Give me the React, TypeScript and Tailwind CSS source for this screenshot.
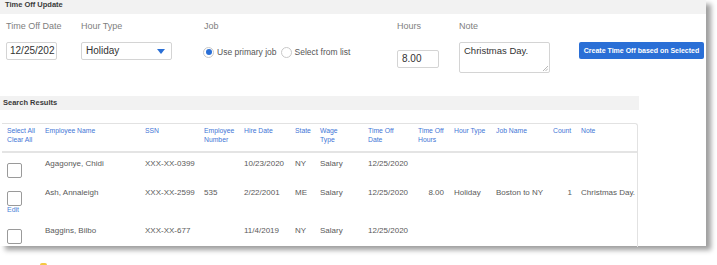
const rows = [
  {
    name: "Agagonye, Chidi",
    ssn: "XXX-XX-0399",
    num: "",
    hire: "10/23/2020",
    state: "NY",
    wage: "Salary",
    date: "12/25/2020",
    hours: "",
    type: "",
    job: "",
    count: "",
    note: "",
    edit: false,
  },
  {
    name: "Ash, Annaleigh",
    ssn: "XXX-XX-2599",
    num: "535",
    hire: "2/22/2001",
    state: "ME",
    wage: "Salary",
    date: "12/25/2020",
    hours: "8.00",
    type: "Holiday",
    job: "Boston to NY",
    count: "1",
    note: "Christmas Day.",
    edit: true,
  },
  {
    name: "Baggins, Bilbo",
    ssn: "XXX-XX-677",
    num: "",
    hire: "11/4/2019",
    state: "NY",
    wage: "Salary",
    date: "12/25/2020",
    hours: "",
    type: "",
    job: "",
    count: "",
    note: "",
    edit: false,
  },
];

const cols = "grid grid-cols-[43px_100px_59px_40px_51px_25px_48px_50px_36px_42px_57px_28px_1fr]";

function Checkbox() {
  return <div className="h-[15px] w-[15px] rounded-[2px] border border-[#9a9a9a] bg-white" />;
}

export default function App() {
  return (
    <div className="h-[265px] w-[717px] overflow-hidden bg-white font-['Liberation_Sans',Arial,sans-serif]">
      <div className="h-[246px] w-[706px] bg-white shadow-[5px_4px_5px_rgba(0,0,0,0.38)]">
        <div className="h-[14px] bg-[#f2f2f2] pl-[5px] text-[7.5px] font-bold leading-[10px] text-[#3a3a3a]">
          Time Off Update
        </div>

        <div className="flex pt-[6px] text-[9px] leading-[12px] text-[#808080]">
          <div className="w-[81px] pl-[6px]">
            <div>Time Off Date</div>
            <div className="mt-[10px] flex h-[18px] w-[51px] items-center overflow-hidden whitespace-nowrap rounded-[2px] border border-[#d4d4d4] pl-[3px] text-[10px] text-[#333]">
              12/25/202
            </div>
          </div>
          <div className="w-[123px]">
            <div>Hour Type</div>
            <div className="mt-[10px] flex h-[18px] w-[91px] items-center justify-between rounded-[2px] border border-[#d4d4d4] pl-[4px] pr-[6px] text-[10px] text-[#333]">
              <span>Holiday</span>
              <svg width="8" height="5" viewBox="0 0 8 5">
                <path d="M0 0h8L4 5z" fill="#2a6fd6" />
              </svg>
            </div>
          </div>
          <div className="w-[193px]">
            <div>Job</div>
            <div className="mt-[14px] flex h-[12px] items-center whitespace-nowrap text-[8.5px] text-[#555]">
              <span className="-ml-[1px] flex h-[11px] w-[11px] items-center justify-center rounded-full border border-[#c8c8c8]">
                <span className="h-[6px] w-[6px] rounded-full bg-[#2a6fd6]" />
              </span>
              <span className="ml-[3px]">Use primary job</span>
              <span className="ml-[4px] h-[11px] w-[11px] rounded-full border border-[#c8c8c8]" />
              <span className="ml-[3px]">Select from list</span>
            </div>
          </div>
          <div className="w-[62px]">
            <div>Hours</div>
            <div className="mt-[18px] flex h-[18px] w-[42px] items-center rounded-[2px] border border-[#d4d4d4] pl-[4px] text-[10px] text-[#333]">
              8.00
            </div>
          </div>
          <div className="w-[120px]">
            <div>Note</div>
            <div className="relative mt-[10px] h-[31px] w-[91px] rounded-[2px] border border-[#d4d4d4] pl-[4px] pt-[2px] text-[9.5px] text-[#333]">
              Christmas Day.
              <svg className="absolute bottom-[1px] right-[1px]" width="5" height="5" viewBox="0 0 5 5">
                <path d="M5 0L0 5M5 2.5L2.5 5" stroke="#999" strokeWidth="0.7" />
              </svg>
            </div>
          </div>
          <div className="pt-[22px]">
            <div className="flex h-[17px] w-[125px] items-center justify-center rounded-[2px] bg-[#2a6fd6] text-[7px] font-bold text-white">
              Create Time Off based on Selected
            </div>
          </div>
        </div>

        <div className="mt-[23px] h-[14px] w-[639px] bg-[#f2f2f2] pl-[3px] text-[7.5px] font-bold leading-[14px] text-[#3a3a3a]">
          Search Results
        </div>

        <div className="ml-[2px] mt-[13px] h-[124px] w-[636px] overflow-hidden rounded-tr-[3px] border-r border-t border-[#e2e2e2]">
          <div className={`${cols} h-[29px] border-b-2 border-[#e4e4e4] pt-[2px] text-[6.8px] leading-[9px] text-[#3f76d6]`}>
            <div className="pl-[5px]">
              <div>Select All</div>
              <div>Clear All</div>
            </div>
            <div>Employee Name</div>
            <div>SSN</div>
            <div>
              Employee
              <br />
              Number
            </div>
            <div>Hire Date</div>
            <div>State</div>
            <div>
              Wage
              <br />
              Type
            </div>
            <div>
              Time Off
              <br />
              Date
            </div>
            <div>
              Time Off
              <br />
              Hours
            </div>
            <div>Hour Type</div>
            <div>Job Name</div>
            <div>Count</div>
            <div>Note</div>
          </div>

          {rows.map((r, i) => (
            <div
              key={r.name}
              className={`${cols} text-[8px] leading-[12px] text-[#5a5a5a] ${
                i === 0 ? "h-[29px] pt-[5px]" : i === 1 ? "h-[38px] pt-[5px]" : "h-[30px] pt-[5px]"
              }`}
            >
              <div className={`pl-[5px] ${i === 0 ? "pt-[5px]" : "pt-[4px]"}`}>
                <Checkbox />
                {r.edit && <div className="-mt-[1px] text-[7px] leading-[9px] text-[#4a7fd8]">Edit</div>}
              </div>
              <div>{r.name}</div>
              <div>{r.ssn}</div>
              <div>{r.num}</div>
              <div>{r.hire}</div>
              <div>{r.state}</div>
              <div>{r.wage}</div>
              <div>{r.date}</div>
              <div className="pr-[10px] text-right">{r.hours}</div>
              <div>{r.type}</div>
              <div>{r.job}</div>
              <div className="pr-[9px] text-right">{r.count}</div>
              <div className="whitespace-nowrap">{r.note}</div>
            </div>
          ))}
        </div>
      </div>
      <div className="ml-[40px] mt-[17px] h-[3px] w-[7px] rounded-t-[2px] bg-[#f5c842]" />
    </div>
  );
}
